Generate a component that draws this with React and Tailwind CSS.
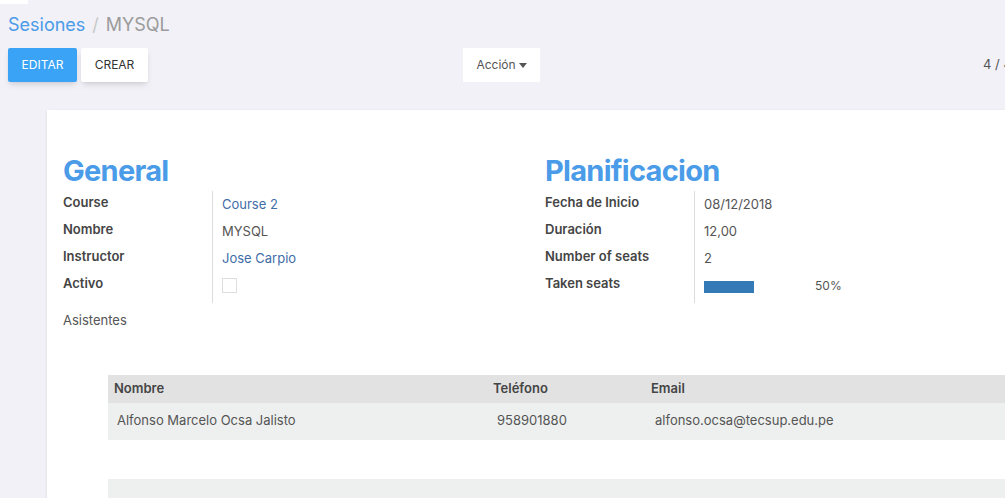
const general = [
  { label: 'Course', value: 'Course 2', link: true },
  { label: 'Nombre', value: 'MYSQL' },
  { label: 'Instructor', value: 'Jose Carpio', link: true },
  { label: 'Activo', checkbox: true },
]

const planning = [
  { label: 'Fecha de Inicio', value: '08/12/2018' },
  { label: 'Duración', value: '12,00' },
  { label: 'Number of seats', value: '2' },
  { label: 'Taken seats', progress: 50 },
]

const FieldGroup = ({ title, fields, labelWidth }) => (
  <div className="flex flex-col">
    <h2 className="text-[29px] font-bold leading-none text-[#4a9be8] tracking-tight mb-[6px]">{title}</h2>
    <div className="flex">
      <div className={`${labelWidth} flex flex-col border-r border-[#dcdcdc] py-[2px]`}>
        {fields.map(f => (
          <div key={f.label} className="h-[27px] flex items-start text-[13px] font-semibold text-[#454545]">
            {f.label}
          </div>
        ))}
      </div>
      <div className="flex flex-col pl-[9px] pt-[4px]">
        {fields.map(f => (
          <div key={f.label} className="h-[27px] flex items-start text-[13px]">
            {f.checkbox && <span className="mt-[2px] w-[15px] h-[15px] border border-[#dedede] bg-white" />}
            {f.progress !== undefined && (
              <div className="flex items-center mt-[2px]">
                <div className="w-[50px] h-[12px] bg-[#337ab7]" />
                <span className="ml-[61px] text-[12px] text-[#555] -mt-[1px]">{f.progress}%</span>
              </div>
            )}
            {f.value && (
              <span className={f.link ? 'text-[#3f6da8]' : 'text-[#555]'}>{f.value}</span>
            )}
          </div>
        ))}
      </div>
    </div>
  </div>
)

export default function App() {
  return (
    <div className="w-[1005px] h-[498px] overflow-hidden bg-[#f1f1f7] relative" style={{ fontFamily: 'Inter, "Open Sans", sans-serif' }}>
      <div className="absolute left-0 top-0 w-[28px] h-[4px] bg-white" />

      {/* Control panel */}
      <div className="pl-[8px] pt-[13px]">
        <div className="text-[18px] leading-[24px]">
          <span className="text-[#4a9be8]">Sesiones</span>
          <span className="text-[#c8c8c8] mx-[7px]">/</span>
          <span className="text-[#9b9b9b]">MYSQL</span>
        </div>
        <div className="flex items-center mt-[11px]">
          <button className="h-[34px] w-[69px] shrink-0 bg-[#3aa3f5] text-white text-[12px] rounded-[2px] shadow-md">EDITAR</button>
          <button className="h-[34px] w-[67px] shrink-0 ml-[4px] bg-white text-[#333] text-[12px] rounded-[2px] shadow-md">CREAR</button>
          <button className="h-[34px] w-[77px] shrink-0 ml-[315px] bg-white text-[#555] text-[12px] flex items-center justify-center gap-[3px]">
            Acción
            <svg width="8" height="5" viewBox="0 0 8 5"><path d="M0 0h8L4 5z" fill="#555" /></svg>
          </button>
          <div className="ml-[443px] text-[13px] text-[#555] whitespace-nowrap">4 / 4</div>
        </div>
      </div>

      {/* Sheet */}
      <div className="ml-[47px] mt-[28px] bg-white w-[1000px] h-[400px] shadow-sm pl-[16px] pt-[46px]">
        <div className="flex">
          <div className="w-[482px]">
            <FieldGroup title="General" fields={general} labelWidth="w-[150px]" />
          </div>
          <FieldGroup title="Planificacion" fields={planning} labelWidth="w-[150px]" />
        </div>

        <div className="mt-[8px] text-[13px] text-[#555]">Asistentes</div>

        <div className="ml-[45px] mt-[44px] text-[13px]">
          <div className="flex h-[28px] items-center bg-[#e2e2e2] font-semibold text-[#454545]">
            <div className="w-[385px] pl-[6px]">Nombre</div>
            <div className="w-[158px]">Teléfono</div>
            <div>Email</div>
          </div>
          <div className="flex h-[37px] items-center bg-[#eef0ef] text-[#555]">
            <div className="w-[385px] pl-[9px]">Alfonso Marcelo Ocsa Jalisto</div>
            <div className="w-[158px] pl-[4px]">958901880</div>
            <div className="pl-[4px]">alfonso.ocsa@tecsup.edu.pe</div>
          </div>
          <div className="h-[39px] bg-white" />
          <div className="h-[30px] bg-[#eef0ef]" />
        </div>
      </div>
    </div>
  )
}
